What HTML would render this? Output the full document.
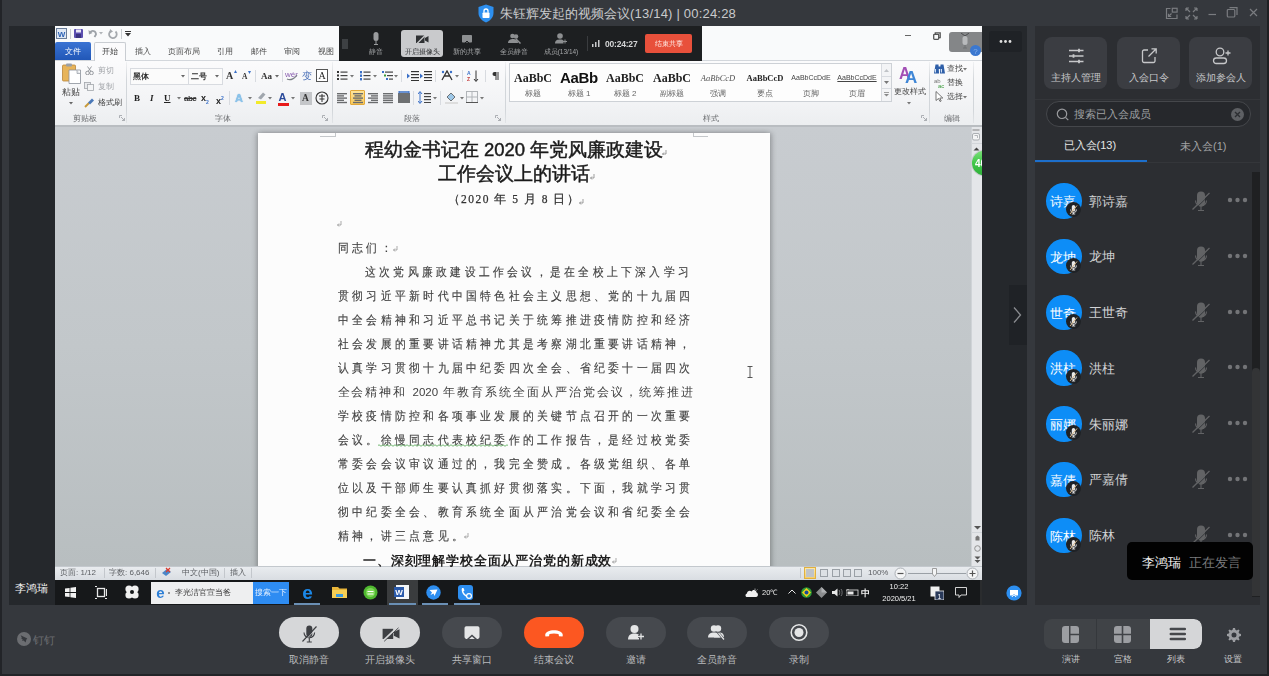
<!DOCTYPE html>
<html><head><meta charset="utf-8">
<style>
*{margin:0;padding:0;box-sizing:border-box}
html,body{width:1269px;height:676px;overflow:hidden;background:#35383d;font-family:"Liberation Sans",sans-serif}
.a{position:absolute}
svg{display:block}
#edgeL{left:0;top:0;width:2px;height:676px;background:#222428}
#edgeR{left:1267px;top:0;width:2px;height:676px;background:#1f2023}
#edgeB{left:0;top:674px;width:1269px;height:2px;background:#222428}
#main{left:9px;top:26px;width:1018px;height:579px;background:#25282c}
#panel{left:1035px;top:26px;width:225px;height:579px;background:#2c2e32}
#word{left:55px;top:26px;width:927px;height:579px;background:#c6cacd;overflow:hidden;filter:blur(0.3px)}
.title{left:500px;top:5px;height:18px;line-height:18px;font-size:13px;color:#c9cacc;white-space:nowrap}
/* panel */
.pbtn{top:11px;width:63px;height:52px;border-radius:8px;background:#3b3d42}
.pbtn .lb{position:absolute;left:0;width:63px;top:35.3px;text-align:center;font-size:9.5px;line-height:12px;color:#c6c7c9;white-space:nowrap}
.pbtn svg{position:absolute;left:23px;top:10px}
.sep{left:0;top:73px;width:225px;height:1px;background:#34363a}
.search{left:11px;top:75px;width:205px;height:26px;border-radius:13px;border:1px solid #45474b;background:#26282c}
.tab1{left:28.5px;top:112px;font-size:11px;color:#e6e6e6;line-height:14px;white-space:nowrap}
.tab2{left:145px;top:112.5px;font-size:11px;color:#a3a4a6;line-height:14px;white-space:nowrap}
.tabline{left:0;top:134px;width:112px;height:2px;background:#1d6fcc}
.tabsep{left:0;top:136px;width:225px;height:1px;background:#34363a}
.item{left:0;width:217px;height:56px}
.av{position:absolute;left:11px;top:0.5px;width:35.5px;height:35.5px;border-radius:50%;background:#0d8df7;color:#fff;font-size:13px;line-height:37.5px;text-align:center;overflow:hidden;letter-spacing:0;text-indent:-1px}
.badge{position:absolute;left:31px;top:19.5px;width:15px;height:15px;border-radius:50%;background:#1f2226}
.nm{position:absolute;left:54px;top:11px;font-size:13px;line-height:16px;color:#d2d3d5;white-space:nowrap}
.mic{position:absolute;left:156px;top:7px}
.dots{position:absolute;left:192px;top:14.7px}
.scrolltrack{left:217px;top:146px;width:8px;height:425px;background:#1f2022}
.thumb{left:217px;top:342px;width:8px;height:228px;background:#333436;border-radius:4px 4px 0 0}
.tbtn{top:616.5px;width:59.5px;height:31.5px;border-radius:16px}
.tbtn svg{position:absolute;left:50%;top:50%;transform:translate(-50%,-50%) translateY(0.5px)}
.tlb{top:652.5px;width:100px;text-align:center;font-size:10px;line-height:14px;color:#b9babc;white-space:nowrap}
.slb{top:652.5px;width:52px;text-align:center;font-size:8.5px;line-height:12px;color:#c5c6c8;white-space:nowrap}
</style></head><body>
<div class="a" id="edgeL"></div>
<div class="a" id="edgeR"></div>
<div class="a" id="edgeB"></div>
<div class="a" id="main"></div>

<!-- title bar -->
<svg class="a" style="left:478px;top:4px" width="16" height="19" viewBox="0 0 16 19"><path d="M8 0.5 L15.5 3 V9 C15.5 13.5 12 16.8 8 18.5 C4 16.8 0.5 13.5 0.5 9 V3 Z" fill="#2d8ff0"/><rect x="4.5" y="8.5" width="7" height="5.5" rx="0.8" fill="#fff"/><path d="M6 8.7 V7 a2 2 0 0 1 4 0 V8.7" stroke="#fff" stroke-width="1.3" fill="none"/></svg>
<div class="a title">朱钰辉发起的视频会议<span style="letter-spacing:0.2px">(13/14) | 00:24:28</span></div>
<svg class="a" style="left:1165px;top:7px" width="100" height="14" viewBox="0 0 100 14" fill="none" stroke="#7a7c80" stroke-width="1.2">
 <path d="M5.5 1.5H1.5V11.5H12V7.5"/><rect x="7.3" y="1.3" width="4.8" height="3.8"/><path d="M3.5 9.5L6.5 6.5M3.5 6.8V9.5H6.2"/>
 <path d="M21 1 L25 5 M21 1 V4 M21 1 H24  M32 1 L28 5 M32 1 V4 M32 1 H29  M21 12 L25 8 M21 12 V9 M21 12 H24  M32 12 L28 8 M32 12 V9 M32 12 H29"/>
 <path d="M43.5 7.5 H51"/>
 <rect x="62.3" y="2.5" width="7.5" height="7.5" rx="1"/><path d="M64.5 0.6 H72 V8"/>
 <path d="M85 2 L92 9 M92 2 L85 9"/>
</svg>

<!-- right panel -->
<div class="a" id="panel">
 <div class="a pbtn" style="left:9px"><svg width="18" height="18" viewBox="0 0 18 18" stroke="#c6c7c9" stroke-width="1.3" fill="none"><path d="M2 3.5H16.5M2 9H16.5M2 14.5H16.5"/><path d="M12 1.8V5.2M6.5 7.3V10.7M12 12.8V16.2" stroke-width="1.8"/></svg><div class="lb">主持人管理</div></div>
 <div class="a pbtn" style="left:82px"><svg width="18" height="18" viewBox="0 0 18 18" stroke="#c6c7c9" stroke-width="1.3" fill="none"><path d="M8 3H4A1.5 1.5 0 0 0 2.5 4.5V14A1.5 1.5 0 0 0 4 15.5H13.5A1.5 1.5 0 0 0 15 14V10"/><path d="M8.5 9.5L16 2M11.5 1.8H16.2V6.5"/></svg><div class="lb">入会口令</div></div>
 <div class="a pbtn" style="left:154px"><svg width="20" height="18" viewBox="0 0 20 18" stroke="#c6c7c9" stroke-width="1.3" fill="none"><circle cx="8" cy="5" r="3.8"/><rect x="1.5" y="11" width="13" height="5.5" rx="2.75"/><path d="M13.5 6H18.5M16 3.5V8.5"/></svg><div class="lb">添加参会人</div></div>
 <div class="a sep"></div>
 <div class="a search"></div>
 <svg class="a" style="left:21px;top:82px" width="14" height="14" viewBox="0 0 14 14" fill="none" stroke="#9a9b9e" stroke-width="1.2"><circle cx="6" cy="5.8" r="4.7"/><path d="M9.5 9.3L12.3 12.1"/></svg>
 <div class="a" style="left:39px;top:81px;font-size:11px;line-height:14px;color:#9fa0a3;white-space:nowrap">搜索已入会成员</div>
 <svg class="a" style="left:196px;top:82px" width="13" height="13" viewBox="0 0 13 13"><circle cx="6.5" cy="6.5" r="6.5" fill="#5e6064"/><path d="M4 4L9 9M9 4L4 9" stroke="#2c2e32" stroke-width="1.4"/></svg>
 <div class="a tab1">已入会(13)</div>
 <div class="a tab2">未入会(1)</div>
 <div class="a tabline"></div>
 <div class="a tabsep"></div>
<div class="a item" style="top:156.5px"><div class="av">诗嘉</div><div class="badge"><svg width="15" height="15" viewBox="0 0 15 15"><rect x="5.8" y="3" width="3.4" height="6.5" rx="1.7" fill="#e8e8e8"/><path d="M4.5 7.5a3 3 0 0 0 6 0M7.5 10.5V12M5.8 12H9.2" stroke="#e8e8e8" stroke-width="0.9" fill="none"/><path d="M4 12L11 3.5" stroke="#d9b98a" stroke-width="1"/></svg></div><div class="nm">郭诗嘉</div><svg class="mic" width="20" height="22" viewBox="0 0 20 22"><rect x="6" y="1.5" width="8" height="15" rx="4" fill="#626365"/><path d="M4.5 10.5a5.5 5.5 0 0 0 11 0M10 16V20.5M7 20.5H13" stroke="#626365" stroke-width="1.1" fill="none"/><path d="M1.5 19.5L18.5 3" stroke="#626365" stroke-width="1.3"/><path d="M2.5 20.5L19.5 4" stroke="#2c2e32" stroke-width="0.8"/></svg><svg class="dots" width="24" height="6" viewBox="0 0 24 6" fill="#737477"><circle cx="3" cy="3" r="2.2"/><circle cx="10.5" cy="3" r="2.2"/><circle cx="18" cy="3" r="2.2"/></svg></div>
<div class="a item" style="top:212.2px"><div class="av">龙坤</div><div class="badge"><svg width="15" height="15" viewBox="0 0 15 15"><rect x="5.8" y="3" width="3.4" height="6.5" rx="1.7" fill="#e8e8e8"/><path d="M4.5 7.5a3 3 0 0 0 6 0M7.5 10.5V12M5.8 12H9.2" stroke="#e8e8e8" stroke-width="0.9" fill="none"/><path d="M4 12L11 3.5" stroke="#d9b98a" stroke-width="1"/></svg></div><div class="nm">龙坤</div><svg class="mic" width="20" height="22" viewBox="0 0 20 22"><rect x="6" y="1.5" width="8" height="15" rx="4" fill="#626365"/><path d="M4.5 10.5a5.5 5.5 0 0 0 11 0M10 16V20.5M7 20.5H13" stroke="#626365" stroke-width="1.1" fill="none"/><path d="M1.5 19.5L18.5 3" stroke="#626365" stroke-width="1.3"/><path d="M2.5 20.5L19.5 4" stroke="#2c2e32" stroke-width="0.8"/></svg><svg class="dots" width="24" height="6" viewBox="0 0 24 6" fill="#737477"><circle cx="3" cy="3" r="2.2"/><circle cx="10.5" cy="3" r="2.2"/><circle cx="18" cy="3" r="2.2"/></svg></div>
<div class="a item" style="top:268.0px"><div class="av">世奇</div><div class="badge"><svg width="15" height="15" viewBox="0 0 15 15"><rect x="5.8" y="3" width="3.4" height="6.5" rx="1.7" fill="#e8e8e8"/><path d="M4.5 7.5a3 3 0 0 0 6 0M7.5 10.5V12M5.8 12H9.2" stroke="#e8e8e8" stroke-width="0.9" fill="none"/><path d="M4 12L11 3.5" stroke="#d9b98a" stroke-width="1"/></svg></div><div class="nm">王世奇</div><svg class="mic" width="20" height="22" viewBox="0 0 20 22"><rect x="6" y="1.5" width="8" height="15" rx="4" fill="#626365"/><path d="M4.5 10.5a5.5 5.5 0 0 0 11 0M10 16V20.5M7 20.5H13" stroke="#626365" stroke-width="1.1" fill="none"/><path d="M1.5 19.5L18.5 3" stroke="#626365" stroke-width="1.3"/><path d="M2.5 20.5L19.5 4" stroke="#2c2e32" stroke-width="0.8"/></svg><svg class="dots" width="24" height="6" viewBox="0 0 24 6" fill="#737477"><circle cx="3" cy="3" r="2.2"/><circle cx="10.5" cy="3" r="2.2"/><circle cx="18" cy="3" r="2.2"/></svg></div>
<div class="a item" style="top:323.8px"><div class="av">洪柱</div><div class="badge"><svg width="15" height="15" viewBox="0 0 15 15"><rect x="5.8" y="3" width="3.4" height="6.5" rx="1.7" fill="#e8e8e8"/><path d="M4.5 7.5a3 3 0 0 0 6 0M7.5 10.5V12M5.8 12H9.2" stroke="#e8e8e8" stroke-width="0.9" fill="none"/><path d="M4 12L11 3.5" stroke="#d9b98a" stroke-width="1"/></svg></div><div class="nm">洪柱</div><svg class="mic" width="20" height="22" viewBox="0 0 20 22"><rect x="6" y="1.5" width="8" height="15" rx="4" fill="#626365"/><path d="M4.5 10.5a5.5 5.5 0 0 0 11 0M10 16V20.5M7 20.5H13" stroke="#626365" stroke-width="1.1" fill="none"/><path d="M1.5 19.5L18.5 3" stroke="#626365" stroke-width="1.3"/><path d="M2.5 20.5L19.5 4" stroke="#2c2e32" stroke-width="0.8"/></svg><svg class="dots" width="24" height="6" viewBox="0 0 24 6" fill="#737477"><circle cx="3" cy="3" r="2.2"/><circle cx="10.5" cy="3" r="2.2"/><circle cx="18" cy="3" r="2.2"/></svg></div>
<div class="a item" style="top:379.5px"><div class="av">丽娜</div><div class="badge"><svg width="15" height="15" viewBox="0 0 15 15"><rect x="5.8" y="3" width="3.4" height="6.5" rx="1.7" fill="#e8e8e8"/><path d="M4.5 7.5a3 3 0 0 0 6 0M7.5 10.5V12M5.8 12H9.2" stroke="#e8e8e8" stroke-width="0.9" fill="none"/><path d="M4 12L11 3.5" stroke="#d9b98a" stroke-width="1"/></svg></div><div class="nm">朱丽娜</div><svg class="mic" width="20" height="22" viewBox="0 0 20 22"><rect x="6" y="1.5" width="8" height="15" rx="4" fill="#626365"/><path d="M4.5 10.5a5.5 5.5 0 0 0 11 0M10 16V20.5M7 20.5H13" stroke="#626365" stroke-width="1.1" fill="none"/><path d="M1.5 19.5L18.5 3" stroke="#626365" stroke-width="1.3"/><path d="M2.5 20.5L19.5 4" stroke="#2c2e32" stroke-width="0.8"/></svg><svg class="dots" width="24" height="6" viewBox="0 0 24 6" fill="#737477"><circle cx="3" cy="3" r="2.2"/><circle cx="10.5" cy="3" r="2.2"/><circle cx="18" cy="3" r="2.2"/></svg></div>
<div class="a item" style="top:435.2px"><div class="av">嘉倩</div><div class="badge"><svg width="15" height="15" viewBox="0 0 15 15"><rect x="5.8" y="3" width="3.4" height="6.5" rx="1.7" fill="#e8e8e8"/><path d="M4.5 7.5a3 3 0 0 0 6 0M7.5 10.5V12M5.8 12H9.2" stroke="#e8e8e8" stroke-width="0.9" fill="none"/><path d="M4 12L11 3.5" stroke="#d9b98a" stroke-width="1"/></svg></div><div class="nm">严嘉倩</div><svg class="mic" width="20" height="22" viewBox="0 0 20 22"><rect x="6" y="1.5" width="8" height="15" rx="4" fill="#626365"/><path d="M4.5 10.5a5.5 5.5 0 0 0 11 0M10 16V20.5M7 20.5H13" stroke="#626365" stroke-width="1.1" fill="none"/><path d="M1.5 19.5L18.5 3" stroke="#626365" stroke-width="1.3"/><path d="M2.5 20.5L19.5 4" stroke="#2c2e32" stroke-width="0.8"/></svg><svg class="dots" width="24" height="6" viewBox="0 0 24 6" fill="#737477"><circle cx="3" cy="3" r="2.2"/><circle cx="10.5" cy="3" r="2.2"/><circle cx="18" cy="3" r="2.2"/></svg></div>
<div class="a item" style="top:491.0px"><div class="av">陈林</div><div class="badge"><svg width="15" height="15" viewBox="0 0 15 15"><rect x="5.8" y="3" width="3.4" height="6.5" rx="1.7" fill="#e8e8e8"/><path d="M4.5 7.5a3 3 0 0 0 6 0M7.5 10.5V12M5.8 12H9.2" stroke="#e8e8e8" stroke-width="0.9" fill="none"/><path d="M4 12L11 3.5" stroke="#d9b98a" stroke-width="1"/></svg></div><div class="nm">陈林</div><svg class="mic" width="20" height="22" viewBox="0 0 20 22"><rect x="6" y="1.5" width="8" height="15" rx="4" fill="#626365"/><path d="M4.5 10.5a5.5 5.5 0 0 0 11 0M10 16V20.5M7 20.5H13" stroke="#626365" stroke-width="1.1" fill="none"/><path d="M1.5 19.5L18.5 3" stroke="#626365" stroke-width="1.3"/><path d="M2.5 20.5L19.5 4" stroke="#2c2e32" stroke-width="0.8"/></svg><svg class="dots" width="24" height="6" viewBox="0 0 24 6" fill="#737477"><circle cx="3" cy="3" r="2.2"/><circle cx="10.5" cy="3" r="2.2"/><circle cx="18" cy="3" r="2.2"/></svg></div>
 <div class="a scrolltrack"></div>
 <div class="a thumb"></div>
</div>

<!-- bottom toolbar -->
<div class="a tbtn" style="left:279px;background:#d6d7d9"><svg width="20" height="22" viewBox="0 0 20 22"><rect x="7.3" y="4" width="6" height="11.5" rx="3" fill="#3d3f43"/><path d="M5 11a5.3 5.3 0 0 0 10.6 0" stroke="#3d3f43" stroke-width="1.1" fill="none"/><path d="M10.3 16.5V20M7.8 20.5H12.8" stroke="#3d3f43" stroke-width="1.1"/><path d="M3.5 20L17.5 5" stroke="#3d3f43" stroke-width="1.2"/><path d="M4.5 20.8L18.5 5.8" stroke="#d6d7d9" stroke-width="0.8"/></svg></div><div class="a tlb" style="left:259px">取消静音</div>
<div class="a tbtn" style="left:360px;background:#d6d7d9"><svg width="22" height="22" viewBox="0 0 22 22"><rect x="3.6" y="7.3" width="10.6" height="10.2" fill="#3d3f43"/><path d="M14.8 10.5L20.5 7.8V17L14.8 14.3Z" fill="#3d3f43"/><path d="M4.5 19L18.8 5.5" stroke="#d6d7d9" stroke-width="1.8"/><path d="M5.2 19.8L19.5 6.3" stroke="#3d3f43" stroke-width="0.9"/></svg></div><div class="a tlb" style="left:340px">开启摄像头</div>
<div class="a tbtn" style="left:442px;background:#46494e"><svg width="20" height="20" viewBox="0 0 20 20"><rect x="2.5" y="3.8" width="15" height="12.6" rx="1.8" fill="#e4e5e6"/><path d="M5.5 17L10 13L14.5 17" stroke="#46494e" stroke-width="1.6" fill="none"/></svg></div><div class="a tlb" style="left:422px">共享窗口</div>
<div class="a tbtn" style="left:524px;background:#fc5721"><svg width="22" height="22" viewBox="0 0 22 22"><path d="M2.2 13.8C2.2 10.5 6.5 8.8 11 8.8C15.5 8.8 19.8 10.5 19.8 13.8L19.5 15L16 14.8L15.5 12.5C13 11.8 9 11.8 6.5 12.5L6 14.8L2.5 15Z" fill="#fff"/></svg></div><div class="a tlb" style="left:504px">结束会议</div>
<div class="a tbtn" style="left:606px;background:#46494e"><svg width="20" height="20" viewBox="0 0 20 20"><circle cx="8.5" cy="6.5" r="4" fill="#e4e5e6"/><path d="M2 17C2 12.5 5 11 8.5 11C10.5 11 12 11.5 13 12.5V17Z" fill="#e4e5e6"/><path d="M12 14H18M15 11V17" stroke="#46494e" stroke-width="3"/><path d="M12 14H18M15 11V17" stroke="#e4e5e6" stroke-width="1.3"/></svg></div><div class="a tlb" style="left:586px">邀请</div>
<div class="a tbtn" style="left:687px;background:#46494e"><svg width="22" height="20" viewBox="0 0 22 20"><circle cx="8" cy="6" r="3.2" fill="#e4e5e6"/><circle cx="12" cy="6" r="3.2" fill="#e4e5e6"/><path d="M2 15C2 11 5 10 8 10C11 10 14 11 14 15Z" fill="#e4e5e6"/><path d="M8 15C8 11 11 10 13 10C16 10 18 11 18 15Z" fill="#e4e5e6"/><path d="M12 10L18 17" stroke="#46494e" stroke-width="2.5"/><path d="M12.5 10.5L18 17" stroke="#e4e5e6" stroke-width="1.2"/></svg></div><div class="a tlb" style="left:667px">全员静音</div>
<div class="a tbtn" style="left:769px;background:#46494e"><svg width="20" height="20" viewBox="0 0 20 20"><circle cx="10" cy="10" r="7.8" stroke="#e4e5e6" stroke-width="1.6" fill="none"/><circle cx="10" cy="10" r="4.5" fill="#e4e5e6"/></svg></div><div class="a tlb" style="left:749px">录制</div>

<div class="a" id="word"><div class="a" style="left:0.0px;top:0.0px;width:927px;height:34px;background:#f9fafb"></div>
<div class="a" style="left:0.0px;top:34.0px;width:927px;height:65px;background:linear-gradient(#fbfbfc,#f3f4f6 60%,#eceef0);border-top:1px solid #d3d7dc"></div>
<div class="a" style="left:0.0px;top:99.0px;width:927px;height:2px;background:#b9bdc1"></div>
<div class="a" style="left:0.0px;top:101.0px;width:927px;height:439px;background:linear-gradient(#c8ccd0,#c2c7ca 50%,#b8bec0)"></div>
<div class="a" style="left:203.0px;top:107.0px;width:512px;height:439px;background:#fcfcfc;box-shadow:-2px 0 5px rgba(0,0,0,.2),2px 0 5px rgba(0,0,0,.22)"></div>
<div class="a" style="left:916.0px;top:101.0px;width:11px;height:439px;background:#e4e6e9;border-left:1px solid #cfd3d7"></div>
<div class="a" style="left:0.0px;top:540.0px;width:927px;height:14px;background:linear-gradient(#e9ecef,#d9dde2);border-top:1px solid #c3c8cd"></div>
<div class="a" style="left:0.0px;top:554.0px;width:927px;height:25px;background:#16181a"></div>
<svg class="a" style="left:1.0px;top:2.0px;" width="11" height="11" viewBox="0 0 11 11"><rect x="0.5" y="0.5" width="10" height="10" fill="#dfe8f5" stroke="#6a7d99"/><text x="5.5" y="8.6" font-size="8" font-weight="bold" text-anchor="middle" fill="#2b61b5" font-family="Liberation Sans">W</text></svg>
<div class="a" style="left:15.0px;top:3.0px;width:1px;height:10px;background:#c8ccd0"></div>
<svg class="a" style="left:19.0px;top:3.0px;" width="9" height="9" viewBox="0 0 9 9"><rect x="0" y="0" width="9" height="9" rx="1" fill="#5b4fb0"/><rect x="2" y="0.5" width="5" height="3" fill="#e8e6f5"/><rect x="2" y="5" width="5" height="4" fill="#3a3380"/></svg>
<svg class="a" style="left:33.0px;top:3.0px;" width="9" height="9" viewBox="0 0 9 9"><path d="M2 3.5 C4 1 8 1.5 8 5.5 L6.5 8" stroke="#9da2a8" stroke-width="1.8" fill="none"/><path d="M0.5 1 L1 5.5 L4.5 4" fill="#9da2a8"/></svg>
<svg class="a" style="left:44.0px;top:6.0px;" width="4" height="3" viewBox="0 0 4 3"><path d="M0 0H4L2 2.5Z" fill="#b0b4b8"/></svg>
<svg class="a" style="left:53.0px;top:3.0px;" width="10" height="10" viewBox="0 0 10 10"><path d="M7.5 2.5 A3.8 3.8 0 1 1 3 2" stroke="#a5a9ae" stroke-width="1.8" fill="none"/><path d="M2 0L5 2.5L1.5 4.5Z" fill="#a5a9ae"/></svg>
<div class="a" style="left:66.0px;top:3.0px;width:1px;height:10px;background:#c8ccd0"></div>
<svg class="a" style="left:70.0px;top:5.0px;" width="6" height="6" viewBox="0 0 6 6"><path d="M0 0H6V1H0Z M0 2H6L3 5.5Z" fill="#333"/></svg>
<div class="a" style="left:849.5px;top:9.0px;width:6px;height:1.2px;background:#666"></div>
<svg class="a" style="left:877.5px;top:5.5px;" width="8" height="8" viewBox="0 0 8 8"><rect x="0.7" y="2.3" width="5" height="5" rx="0.8" fill="none" stroke="#555" stroke-width="1.3"/><path d="M2.3 2.3V0.8H7.2V5.7H5.7" fill="none" stroke="#555" stroke-width="1.3"/></svg>
<div class="a" style="left:0.0px;top:16.0px;width:36px;height:18px;background:linear-gradient(#3a73d3,#2157b7);border-radius:2px 2px 0 0"></div>
<div class="a" style="left:0.0px;top:19.5px;width:36px;font-size:8px;line-height:12px;color:#ffffff;white-space:nowrap;text-align:center;">文件</div>
<div class="a" style="left:39.0px;top:16.0px;width:32px;height:19px;background:#fbfbfc;border:1px solid #c9cdd2;border-bottom:none;border-radius:2px 2px 0 0"></div>
<div class="a" style="left:39.0px;top:20.0px;width:32px;font-size:8px;line-height:12px;color:#3a3a3a;white-space:nowrap;text-align:center;">开始</div>
<div class="a" style="left:68.0px;top:19.5px;width:40px;font-size:8px;line-height:12px;color:#4a4a4a;white-space:nowrap;text-align:center;">插入</div>
<div class="a" style="left:109.0px;top:19.5px;width:40px;font-size:8px;line-height:12px;color:#4a4a4a;white-space:nowrap;text-align:center;">页面布局</div>
<div class="a" style="left:150.0px;top:19.5px;width:40px;font-size:8px;line-height:12px;color:#4a4a4a;white-space:nowrap;text-align:center;">引用</div>
<div class="a" style="left:184.0px;top:19.5px;width:40px;font-size:8px;line-height:12px;color:#4a4a4a;white-space:nowrap;text-align:center;">邮件</div>
<div class="a" style="left:217.0px;top:19.5px;width:40px;font-size:8px;line-height:12px;color:#4a4a4a;white-space:nowrap;text-align:center;">审阅</div>
<div class="a" style="left:251.0px;top:19.5px;width:40px;font-size:8px;line-height:12px;color:#4a4a4a;white-space:nowrap;text-align:center;">视图</div>
<div class="a" style="left:71.0px;top:36.0px;width:1px;height:61px;background:linear-gradient(rgba(200,204,208,0.2),#d2d6da 30%,#d2d6da 80%,rgba(200,204,208,0.3))"></div>
<div class="a" style="left:277.0px;top:36.0px;width:1px;height:61px;background:linear-gradient(rgba(200,204,208,0.2),#d2d6da 30%,#d2d6da 80%,rgba(200,204,208,0.3))"></div>
<div class="a" style="left:450.0px;top:36.0px;width:1px;height:61px;background:linear-gradient(rgba(200,204,208,0.2),#d2d6da 30%,#d2d6da 80%,rgba(200,204,208,0.3))"></div>
<div class="a" style="left:874.0px;top:36.0px;width:1px;height:61px;background:linear-gradient(rgba(200,204,208,0.2),#d2d6da 30%,#d2d6da 80%,rgba(200,204,208,0.3))"></div>
<div class="a" style="left:918.0px;top:36.0px;width:1px;height:61px;background:linear-gradient(rgba(200,204,208,0.2),#d2d6da 30%,#d2d6da 80%,rgba(200,204,208,0.3))"></div>
<svg class="a" style="left:7.0px;top:37.0px;" width="19" height="21" viewBox="0 0 19 21"><rect x="0.5" y="2" width="13" height="16" rx="1" fill="#e7b45a" stroke="#b9853a" stroke-width="0.8"/><rect x="4" y="0.5" width="6" height="3" rx="1" fill="#9aa0a8"/><path d="M7 7H18.5V20.5H7Z" fill="#fff" stroke="#8a9099" stroke-width="0.8"/><path d="M15 7V10.5H18.5" fill="#e0e3e7" stroke="#8a9099" stroke-width="0.6"/></svg>
<div class="a" style="left:1.0px;top:60.2px;width:30px;font-size:8.5px;line-height:12.5px;color:#444;white-space:nowrap;text-align:center;">粘贴</div>
<svg class="a" style="left:14.0px;top:76.0px;" width="4" height="3" viewBox="0 0 4 3"><path d="M0 0H4L2 2.5Z" fill="#666"/></svg>
<svg class="a" style="left:30.0px;top:40.0px;" width="9" height="9" viewBox="0 0 9 9"><circle cx="2.5" cy="7" r="1.8" fill="none" stroke="#8d9196" stroke-width="0.9"/><circle cx="6.5" cy="7" r="1.8" fill="none" stroke="#8d9196" stroke-width="0.9"/><path d="M3 5.5L6.5 0.5M6 5.5L2.5 0.5" stroke="#8d9196" stroke-width="0.9"/></svg>
<div class="a" style="left:43.0px;top:38.8px;font-size:7.5px;line-height:11.5px;color:#a4a7ab;white-space:nowrap;">剪切</div>
<svg class="a" style="left:29.0px;top:56.0px;" width="10" height="9" viewBox="0 0 10 9"><rect x="0.5" y="0.5" width="6" height="6" fill="#e8eaed" stroke="#a2a6ab" stroke-width="0.8"/><rect x="3.5" y="2.5" width="6" height="6" fill="#f4f5f6" stroke="#a2a6ab" stroke-width="0.8"/></svg>
<div class="a" style="left:43.0px;top:54.8px;font-size:7.5px;line-height:11.5px;color:#a4a7ab;white-space:nowrap;">复制</div>
<svg class="a" style="left:29.0px;top:71.0px;" width="11" height="11" viewBox="0 0 11 11"><path d="M1 10L5 6" stroke="#c89a3a" stroke-width="2"/><path d="M4 5.5L8 1.5L10 3.5L6 7.5Z" fill="#4a78b8"/></svg>
<div class="a" style="left:43.0px;top:70.5px;font-size:8px;line-height:12px;color:#3e3e3e;white-space:nowrap;">格式刷</div>
<div class="a" style="left:9.5px;top:86.5px;width:40px;font-size:8px;line-height:12px;color:#6d6f72;white-space:nowrap;text-align:center;">剪贴板</div>
<svg class="a" style="left:64.0px;top:89.0px;" width="6" height="6" viewBox="0 0 6 6"><path d="M0.5 0.5H3M0.5 0.5V3M2 2L5.5 5.5M5.5 3V5.5H3" stroke="#9a9ea3" stroke-width="0.8" fill="none"/></svg>
<div class="a" style="left:75.0px;top:42.0px;width:59px;height:17px;background:#fbfbfb;border:1px solid #d8dbe0"></div>
<div class="a" style="left:77.5px;top:44.8px;font-size:7.5px;line-height:11.5px;color:#2e2e2e;white-space:nowrap;font-weight:bold">黑体</div>
<svg class="a" style="left:126.0px;top:49.0px;" width="4" height="3" viewBox="0 0 4 3"><path d="M0 0H4L2 2.5Z" fill="#666"/></svg>
<div class="a" style="left:133.0px;top:42.0px;width:35px;height:17px;background:#fbfbfb;border:1px solid #d8dbe0"></div>
<div class="a" style="left:135.5px;top:44.5px;font-size:8px;line-height:12px;color:#2e2e2e;white-space:nowrap;font-weight:bold">二号</div>
<svg class="a" style="left:160.0px;top:49.0px;" width="4" height="3" viewBox="0 0 4 3"><path d="M0 0H4L2 2.5Z" fill="#666"/></svg>
<div class="a" style="left:171.0px;top:43.0px;font-size:10px;line-height:14px;color:#333;white-space:nowrap;font-family:'Liberation Serif';font-weight:bold">A</div>
<svg class="a" style="left:179.0px;top:44.0px;" width="3" height="3" viewBox="0 0 3 3"><path d="M0 3L1.5 0L3 3Z" fill="#3a70c8"/></svg>
<div class="a" style="left:187.0px;top:45.2px;font-size:7.5px;line-height:11.5px;color:#333;white-space:nowrap;font-family:'Liberation Serif';font-weight:bold">A</div>
<svg class="a" style="left:193.0px;top:45.0px;" width="3" height="3" viewBox="0 0 3 3"><path d="M0 0L1.5 3L3 0Z" fill="#3a70c8"/></svg>
<div class="a" style="left:200.0px;top:44.0px;width:1px;height:12px;background:#d8dbe0"></div>
<div class="a" style="left:206.0px;top:43.5px;font-size:9px;line-height:13px;color:#333;white-space:nowrap;font-family:'Liberation Serif';font-weight:bold">Aa</div>
<svg class="a" style="left:220.0px;top:49.0px;" width="4" height="3" viewBox="0 0 4 3"><path d="M0 0H4L2 2.5Z" fill="#666"/></svg>
<div class="a" style="left:227.0px;top:44.0px;width:1px;height:12px;background:#d8dbe0"></div>
<svg class="a" style="left:230.0px;top:43.0px;" width="13" height="12" viewBox="0 0 13 12"><text x="0" y="8" font-size="8" fill="#8a5fb0" font-family="Liberation Sans">wén</text><path d="M2 10 C6 12 10 9 12 6" stroke="#7a7f85" stroke-width="1.2" fill="none"/></svg>
<div class="a" style="left:247.0px;top:42.5px;font-size:10px;line-height:14px;color:#4a70b8;white-space:nowrap;">变</div>
<div class="a" style="left:261.0px;top:43.0px;width:12px;height:13px;border:1px solid #555;background:#fff"></div>
<div class="a" style="left:263.5px;top:42.5px;font-size:10px;line-height:14px;color:#222;white-space:nowrap;font-family:'Liberation Serif'">A</div>
<div class="a" style="left:79.0px;top:66.0px;font-size:9px;line-height:13px;color:#222;white-space:nowrap;font-family:'Liberation Serif';font-weight:bold">B</div>
<div class="a" style="left:95.0px;top:66.0px;font-size:9px;line-height:13px;color:#222;white-space:nowrap;font-family:'Liberation Serif';font-style:italic;font-weight:bold">I</div>
<div class="a" style="left:109.0px;top:66.0px;font-size:9px;line-height:13px;color:#222;white-space:nowrap;font-family:'Liberation Serif';font-weight:bold"><u>U</u></div>
<svg class="a" style="left:122.0px;top:71.0px;" width="4" height="3" viewBox="0 0 4 3"><path d="M0 0H4L2 2.5Z" fill="#777"/></svg>
<div class="a" style="left:129.0px;top:66.5px;font-size:8px;line-height:12px;color:#333;white-space:nowrap;font-weight:bold;letter-spacing:-0.5px"><s>abc</s></div>
<div class="a" style="left:146.0px;top:66.0px;font-size:9px;line-height:13px;color:#222;white-space:nowrap;font-weight:bold">x<sub style='font-size:5px;color:#3a70c8'>2</sub></div>
<div class="a" style="left:161.0px;top:66.0px;font-size:9px;line-height:13px;color:#222;white-space:nowrap;font-weight:bold">x<sup style='font-size:5px;color:#3a70c8'>2</sup></div>
<div class="a" style="left:174.0px;top:65.0px;width:1px;height:14px;background:#d8dbe0"></div>
<div class="a" style="left:180.0px;top:65.0px;font-size:11px;line-height:15px;color:#8cc4ea;white-space:nowrap;font-weight:bold;text-shadow:0 0 1px #5a9fd8">A</div>
<svg class="a" style="left:193.0px;top:71.0px;" width="4" height="3" viewBox="0 0 4 3"><path d="M0 0H4L2 2.5Z" fill="#777"/></svg>
<svg class="a" style="left:200.0px;top:65.0px;" width="12" height="14" viewBox="0 0 12 14"><path d="M3 7L8 1.5L10.5 3.5L6 8.5Z" fill="#a0a6ad"/><rect x="1" y="10" width="10" height="3" fill="#f2ea2a"/></svg>
<svg class="a" style="left:213.0px;top:71.0px;" width="4" height="3" viewBox="0 0 4 3"><path d="M0 0H4L2 2.5Z" fill="#777"/></svg>
<div class="a" style="left:223.5px;top:64.0px;font-size:11px;line-height:15px;color:#2a4a9a;white-space:nowrap;font-weight:bold">A</div>
<div class="a" style="left:223.0px;top:77.0px;width:11px;height:3px;background:#e81a1a"></div>
<svg class="a" style="left:236.0px;top:71.0px;" width="4" height="3" viewBox="0 0 4 3"><path d="M0 0H4L2 2.5Z" fill="#777"/></svg>
<div class="a" style="left:245.0px;top:66.0px;width:12px;height:13px;background:#c4c6c9"></div>
<div class="a" style="left:247.0px;top:65.8px;font-size:9.5px;line-height:13.5px;color:#333;white-space:nowrap;font-family:'Liberation Serif';font-weight:bold">A</div>
<svg class="a" style="left:260.0px;top:65.0px;" width="14" height="14" viewBox="0 0 14 14"><circle cx="7" cy="7" r="6" fill="none" stroke="#333" stroke-width="1.1"/><path d="M4 5H10M7 3V11M4.5 8H9.5" stroke="#333" stroke-width="1"/></svg>
<div class="a" style="left:148.0px;top:86.5px;width:40px;font-size:8px;line-height:12px;color:#6d6f72;white-space:nowrap;text-align:center;">字体</div>
<svg class="a" style="left:267.0px;top:89.0px;" width="6" height="6" viewBox="0 0 6 6"><path d="M0.5 0.5H3M0.5 0.5V3M2 2L5.5 5.5M5.5 3V5.5H3" stroke="#9a9ea3" stroke-width="0.8" fill="none"/></svg>
<svg class="a" style="left:282.0px;top:45.0px;" width="11" height="10" viewBox="0 0 11 10"><rect x="0" y="0.0" width="2" height="2" fill="#333"/><rect x="3.5" y="0.5" width="7" height="1.2" fill="#444"/><rect x="0" y="3.5" width="2" height="2" fill="#333"/><rect x="3.5" y="4.0" width="7" height="1.2" fill="#444"/><rect x="0" y="7.0" width="2" height="2" fill="#333"/><rect x="3.5" y="7.5" width="7" height="1.2" fill="#444"/></svg>
<svg class="a" style="left:295.0px;top:49.0px;" width="4" height="3" viewBox="0 0 4 3"><path d="M0 0H4L2 2.5Z" fill="#777"/></svg>
<svg class="a" style="left:305.0px;top:45.0px;" width="11" height="10" viewBox="0 0 11 10"><rect x="0" y="0.0" width="2" height="2.4" fill="#3a70c8"/><rect x="3.5" y="0.5" width="7" height="1.2" fill="#444"/><rect x="0" y="3.5" width="2" height="2.4" fill="#3a70c8"/><rect x="3.5" y="4.0" width="7" height="1.2" fill="#444"/><rect x="0" y="7.0" width="2" height="2.4" fill="#3a70c8"/><rect x="3.5" y="7.5" width="7" height="1.2" fill="#444"/></svg>
<svg class="a" style="left:318.0px;top:49.0px;" width="4" height="3" viewBox="0 0 4 3"><path d="M0 0H4L2 2.5Z" fill="#777"/></svg>
<svg class="a" style="left:327.0px;top:45.0px;" width="12" height="11" viewBox="0 0 12 11"><rect x="0" y="0" width="2" height="2" fill="#3a70c8"/><rect x="3" y="0.5" width="8" height="1.2" fill="#444"/><rect x="2" y="3.5" width="2" height="2" fill="#3a9a3a"/><rect x="5" y="4" width="6" height="1.2" fill="#444"/><rect x="4" y="7" width="2" height="2" fill="#3a70c8"/><rect x="7" y="7.5" width="4" height="1.2" fill="#444"/></svg>
<svg class="a" style="left:339.0px;top:49.0px;" width="4" height="3" viewBox="0 0 4 3"><path d="M0 0H4L2 2.5Z" fill="#777"/></svg>
<div class="a" style="left:346.0px;top:44.0px;width:1px;height:12px;background:#d8dbe0"></div>
<svg class="a" style="left:352.0px;top:45.0px;" width="12" height="10" viewBox="0 0 12 10"><rect x="4" y="0" width="8" height="1.2" fill="#333"/><rect x="4" y="3" width="8" height="1.2" fill="#333"/><rect x="4" y="6" width="8" height="1.2" fill="#333"/><rect x="4" y="9" width="8" height="1" fill="#333"/><path d="M0 2.5L3 5L0 7.5Z" fill="#3a70c8"/></svg>
<svg class="a" style="left:365.0px;top:45.0px;" width="12" height="10" viewBox="0 0 12 10"><rect x="4" y="0" width="8" height="1.2" fill="#333"/><rect x="4" y="3" width="8" height="1.2" fill="#333"/><rect x="4" y="6" width="8" height="1.2" fill="#333"/><rect x="4" y="9" width="8" height="1" fill="#333"/><path d="M0 2.5L3 5L0 7.5Z" fill="#3a70c8"/></svg>
<div class="a" style="left:380.0px;top:44.0px;width:1px;height:12px;background:#d8dbe0"></div>
<svg class="a" style="left:386.0px;top:44.0px;" width="13" height="11" viewBox="0 0 13 11"><path d="M1 10L6 1L11 10M3 6H9" stroke="#333" stroke-width="1.3" fill="none"/><circle cx="2" cy="2" r="1.2" fill="#3a70c8"/><circle cx="10" cy="2" r="1.2" fill="#3a70c8"/></svg>
<svg class="a" style="left:400.0px;top:49.0px;" width="4" height="3" viewBox="0 0 4 3"><path d="M0 0H4L2 2.5Z" fill="#777"/></svg>
<div class="a" style="left:407.0px;top:44.0px;width:1px;height:12px;background:#d8dbe0"></div>
<svg class="a" style="left:412.0px;top:44.0px;" width="12" height="12" viewBox="0 0 12 12"><text x="0" y="5" font-size="5" fill="#3a70c8" font-family="Liberation Sans" font-weight="bold">A</text><text x="0" y="11" font-size="5" fill="#c03030" font-family="Liberation Sans" font-weight="bold">Z</text><path d="M9 0.5V11M7 9L9 11.5L11 9" stroke="#333" stroke-width="1" fill="none"/></svg>
<div class="a" style="left:430.0px;top:44.0px;width:1px;height:12px;background:#d8dbe0"></div>
<svg class="a" style="left:436.0px;top:45.0px;" width="8" height="10" viewBox="0 0 8 10"><path d="M5 1V9M7 1V9" stroke="#333" stroke-width="1"/><path d="M5 1H3.5A2 2 0 0 0 3.5 5H5" fill="#333"/></svg>
<svg class="a" style="left:282.0px;top:66.5px;" width="10" height="11" viewBox="0 0 10 11"><rect x="0" y="0.0" width="10" height="1.4" fill="#6a6c6e"/><rect x="0" y="2.2" width="7" height="1.4" fill="#6a6c6e"/><rect x="0" y="4.4" width="10" height="1.4" fill="#6a6c6e"/><rect x="0" y="6.6000000000000005" width="7" height="1.4" fill="#6a6c6e"/><rect x="0" y="8.8" width="10" height="1.4" fill="#6a6c6e"/></svg>
<div class="a" style="left:295.0px;top:64.0px;width:15px;height:15px;background:linear-gradient(#fde49a,#f8c95a);border:1px solid #e3a93a;border-radius:1px"></div>
<svg class="a" style="left:297.5px;top:66.5px;" width="10" height="11" viewBox="0 0 10 11"><rect x="0.0" y="0.0" width="10" height="1.4" fill="#6a6c6e"/><rect x="1.5" y="2.2" width="7" height="1.4" fill="#6a6c6e"/><rect x="0.0" y="4.4" width="10" height="1.4" fill="#6a6c6e"/><rect x="1.5" y="6.6000000000000005" width="7" height="1.4" fill="#6a6c6e"/><rect x="0.0" y="8.8" width="10" height="1.4" fill="#6a6c6e"/></svg>
<svg class="a" style="left:313.0px;top:66.5px;" width="10" height="11" viewBox="0 0 10 11"><rect x="0" y="0.0" width="10" height="1.4" fill="#6a6c6e"/><rect x="3" y="2.2" width="7" height="1.4" fill="#6a6c6e"/><rect x="0" y="4.4" width="10" height="1.4" fill="#6a6c6e"/><rect x="3" y="6.6000000000000005" width="7" height="1.4" fill="#6a6c6e"/><rect x="0" y="8.8" width="10" height="1.4" fill="#6a6c6e"/></svg>
<svg class="a" style="left:328.0px;top:66.5px;" width="10" height="11" viewBox="0 0 10 11"><rect x="0.0" y="0.0" width="10" height="1.4" fill="#6a6c6e"/><rect x="0.0" y="2.2" width="10" height="1.4" fill="#6a6c6e"/><rect x="0.0" y="4.4" width="10" height="1.4" fill="#6a6c6e"/><rect x="0.0" y="6.6000000000000005" width="10" height="1.4" fill="#6a6c6e"/><rect x="0.0" y="8.8" width="10" height="1.4" fill="#6a6c6e"/></svg>
<svg class="a" style="left:343.0px;top:65.0px;" width="12" height="13" viewBox="0 0 12 13"><rect x="0" y="2" width="12" height="10" fill="#6e7072"/><path d="M1 1H11" stroke="#3a70c8" stroke-width="1.5"/><path d="M1 0V2.5M11 0V2.5" stroke="#3a70c8" stroke-width="1"/></svg>
<div class="a" style="left:358.0px;top:65.0px;width:1px;height:14px;background:#d8dbe0"></div>
<svg class="a" style="left:363.0px;top:65.0px;" width="14" height="13" viewBox="0 0 14 13"><path d="M2 1V12M0 3L2 0.5L4 3M0 10L2 12.5L4 10" stroke="#3a70c8" stroke-width="1" fill="none"/><rect x="6" y="2" width="7" height="1.2" fill="#444"/><rect x="6" y="5" width="7" height="1.2" fill="#444"/><rect x="6" y="8" width="7" height="1.2" fill="#444"/><rect x="6" y="11" width="7" height="1" fill="#444"/></svg>
<svg class="a" style="left:378.0px;top:71.0px;" width="4" height="3" viewBox="0 0 4 3"><path d="M0 0H4L2 2.5Z" fill="#777"/></svg>
<div class="a" style="left:385.0px;top:65.0px;width:1px;height:14px;background:#d8dbe0"></div>
<svg class="a" style="left:390.0px;top:65.0px;" width="13" height="13" viewBox="0 0 13 13"><path d="M2 6L6 2L10 6L6 10Z" fill="#9ec8e8" stroke="#555" stroke-width="0.8"/><rect x="0" y="11" width="13" height="2" fill="#ddd"/></svg>
<svg class="a" style="left:405.0px;top:71.0px;" width="4" height="3" viewBox="0 0 4 3"><path d="M0 0H4L2 2.5Z" fill="#777"/></svg>
<svg class="a" style="left:411.0px;top:65.0px;" width="12" height="12" viewBox="0 0 12 12"><rect x="0.5" y="0.5" width="11" height="11" fill="none" stroke="#b0b4b8"/><path d="M6 0.5V11.5M0.5 6H11.5" stroke="#b0b4b8"/><path d="M0 11.5H12" stroke="#555"/></svg>
<svg class="a" style="left:425.0px;top:71.0px;" width="4" height="3" viewBox="0 0 4 3"><path d="M0 0H4L2 2.5Z" fill="#777"/></svg>
<div class="a" style="left:337.0px;top:86.5px;width:40px;font-size:8px;line-height:12px;color:#6d6f72;white-space:nowrap;text-align:center;">段落</div>
<svg class="a" style="left:440.0px;top:89.0px;" width="6" height="6" viewBox="0 0 6 6"><path d="M0.5 0.5H3M0.5 0.5V3M2 2L5.5 5.5M5.5 3V5.5H3" stroke="#9a9ea3" stroke-width="0.8" fill="none"/></svg>
<div class="a" style="left:454.0px;top:37.0px;width:383px;height:39px;background:#fdfdfd;border:1px solid #cdd1d6"></div>
<div class="a" style="left:455.0px;top:44.0px;width:46px;height:16px;line-height:16px;text-align:center;white-space:nowrap;overflow:hidden;font-family:'Liberation Serif';font-weight:bold;font-size:12px;color:#222">AaBbC</div>
<div class="a" style="left:455.0px;top:61.5px;width:46px;font-size:8px;line-height:12px;color:#666;white-space:nowrap;text-align:center;">标题</div>
<div class="a" style="left:501.0px;top:44.0px;width:46px;height:16px;line-height:16px;text-align:center;white-space:nowrap;overflow:hidden;font-weight:bold;font-size:15px;color:#111;letter-spacing:-0.3px">AaBb</div>
<div class="a" style="left:501.0px;top:61.5px;width:46px;font-size:8px;line-height:12px;color:#666;white-space:nowrap;text-align:center;">标题 1</div>
<div class="a" style="left:547.0px;top:44.0px;width:46px;height:16px;line-height:16px;text-align:center;white-space:nowrap;overflow:hidden;font-family:'Liberation Serif';font-weight:bold;font-size:12px;color:#222">AaBbC</div>
<div class="a" style="left:547.0px;top:61.5px;width:46px;font-size:8px;line-height:12px;color:#666;white-space:nowrap;text-align:center;">标题 2</div>
<div class="a" style="left:594.0px;top:44.0px;width:46px;height:16px;line-height:16px;text-align:center;white-space:nowrap;overflow:hidden;font-family:'Liberation Serif';font-weight:bold;font-size:12px;color:#222">AaBbC</div>
<div class="a" style="left:594.0px;top:61.5px;width:46px;font-size:8px;line-height:12px;color:#666;white-space:nowrap;text-align:center;">副标题</div>
<div class="a" style="left:640.0px;top:44.0px;width:46px;height:16px;line-height:16px;text-align:center;white-space:nowrap;overflow:hidden;font-family:'Liberation Serif';font-style:italic;font-size:8.5px;color:#555">AaBbCcD</div>
<div class="a" style="left:640.0px;top:61.5px;width:46px;font-size:8px;line-height:12px;color:#666;white-space:nowrap;text-align:center;">强调</div>
<div class="a" style="left:687.0px;top:44.0px;width:46px;height:16px;line-height:16px;text-align:center;white-space:nowrap;overflow:hidden;font-family:'Liberation Serif';font-weight:bold;font-size:8.5px;color:#222">AaBbCcD</div>
<div class="a" style="left:687.0px;top:61.5px;width:46px;font-size:8px;line-height:12px;color:#666;white-space:nowrap;text-align:center;">要点</div>
<div class="a" style="left:733.0px;top:44.0px;width:46px;height:16px;line-height:16px;text-align:center;white-space:nowrap;overflow:hidden;font-size:7px;color:#444">AaBbCcDdE</div>
<div class="a" style="left:733.0px;top:61.5px;width:46px;font-size:8px;line-height:12px;color:#666;white-space:nowrap;text-align:center;">页脚</div>
<div class="a" style="left:779.0px;top:44.0px;width:46px;height:16px;line-height:16px;text-align:center;white-space:nowrap;overflow:hidden;font-size:7px;color:#444"><u>AaBbCcDdE</u></div>
<div class="a" style="left:779.0px;top:61.5px;width:46px;font-size:8px;line-height:12px;color:#666;white-space:nowrap;text-align:center;">页眉</div>
<div class="a" style="left:826.0px;top:38.0px;width:10px;height:37px;background:#f3f4f6;border-left:1px solid #d8dbe0"></div>
<div class="a" style="left:826.0px;top:50.0px;width:10px;height:1px;background:#d8dbe0"></div>
<div class="a" style="left:826.0px;top:62.0px;width:10px;height:1px;background:#d8dbe0"></div>
<svg class="a" style="left:829.0px;top:43.0px;" width="5" height="3" viewBox="0 0 5 3"><path d="M0 3H5L2.5 0Z" fill="#c0c3c7"/></svg>
<svg class="a" style="left:829.0px;top:55.0px;" width="5" height="3" viewBox="0 0 5 3"><path d="M0 0H5L2.5 3Z" fill="#777"/></svg>
<svg class="a" style="left:829.0px;top:66.0px;" width="5" height="5" viewBox="0 0 5 5"><path d="M0 0.5H5" stroke="#888" stroke-width="0.8"/><path d="M0 2H5L2.5 4.5Z" fill="#888"/></svg>
<svg class="a" style="left:844.0px;top:38.0px;" width="20" height="19" viewBox="0 0 20 19"><text x="0" y="15" font-size="16" font-weight="bold" fill="#a24fb5" font-family="Liberation Sans">A</text><text x="6" y="19" font-size="17" font-weight="bold" fill="#3f86d6" font-family="Liberation Sans">A</text></svg>
<div class="a" style="left:834.5px;top:60.0px;width:40px;font-size:8px;line-height:12px;color:#444;white-space:nowrap;text-align:center;">更改样式</div>
<svg class="a" style="left:852.0px;top:76.0px;" width="4" height="3" viewBox="0 0 4 3"><path d="M0 0H4L2 2.5Z" fill="#777"/></svg>
<div class="a" style="left:636.0px;top:86.5px;width:40px;font-size:8px;line-height:12px;color:#6d6f72;white-space:nowrap;text-align:center;">样式</div>
<svg class="a" style="left:866.0px;top:89.0px;" width="6" height="6" viewBox="0 0 6 6"><path d="M0.5 0.5H3M0.5 0.5V3M2 2L5.5 5.5M5.5 3V5.5H3" stroke="#9a9ea3" stroke-width="0.8" fill="none"/></svg>
<svg class="a" style="left:879.0px;top:38.0px;" width="11" height="10" viewBox="0 0 11 10"><path d="M1.5 0.5H4.5L5 9.5H0Z" fill="#2f5fa8"/><path d="M6.5 0.5H9.5L11 9.5H6Z" fill="#2f5fa8"/><rect x="4" y="2.5" width="3" height="2.5" fill="#2f5fa8"/><path d="M1.5 5V8.5M7.5 5V8.5" stroke="#cfe0f5" stroke-width="1"/></svg>
<div class="a" style="left:892.0px;top:37.0px;font-size:8px;line-height:12px;color:#444;white-space:nowrap;">查找</div>
<svg class="a" style="left:908.0px;top:42.0px;" width="4" height="3" viewBox="0 0 4 3"><path d="M0 0H4L2 2.5Z" fill="#777"/></svg>
<svg class="a" style="left:879.0px;top:51.0px;" width="11" height="11" viewBox="0 0 11 11"><text x="0" y="6" font-size="6" fill="#777" font-family="Liberation Sans">ab</text><text x="4" y="11" font-size="6" fill="#3a9a3a" font-family="Liberation Sans">ac</text></svg>
<div class="a" style="left:892.0px;top:50.5px;font-size:8px;line-height:12px;color:#444;white-space:nowrap;">替换</div>
<svg class="a" style="left:880.0px;top:65.0px;" width="8" height="11" viewBox="0 0 8 11"><path d="M1 0.5V9.5L3.5 7.5L5 10.5L6.2 10L4.8 7H7.8Z" fill="#fff" stroke="#555" stroke-width="0.8"/></svg>
<div class="a" style="left:892.0px;top:65.0px;font-size:8px;line-height:12px;color:#444;white-space:nowrap;">选择</div>
<svg class="a" style="left:908.0px;top:70.0px;" width="4" height="3" viewBox="0 0 4 3"><path d="M0 0H4L2 2.5Z" fill="#777"/></svg>
<div class="a" style="left:877.0px;top:86.5px;width:40px;font-size:8px;line-height:12px;color:#6d6f72;white-space:nowrap;text-align:center;">编辑</div>
<div class="a" style="left:284.0px;top:0.0px;width:363px;height:35px;background:#1d1f21"></div>
<div class="a" style="left:287.0px;top:13.0px;width:6px;height:10px;background:#3d4043"></div>
<svg class="a" style="left:317.0px;top:6.0px;" width="8" height="13" viewBox="0 0 8 13"><rect x="1.5" y="0" width="5" height="9" rx="2.5" fill="#9a9c9e"/><path d="M4 9V12.5M2 12.5H6" stroke="#9a9c9e" stroke-width="1"/></svg>
<div class="a" style="left:306.0px;top:21.2px;width:30px;font-size:6.5px;line-height:10.5px;color:#a5a7a9;white-space:nowrap;text-align:center;">静音</div>
<div class="a" style="left:346.0px;top:4.0px;width:42px;height:27px;background:#c9cacc;border-radius:3px"></div>
<svg class="a" style="left:361.0px;top:8.0px;" width="13" height="10" viewBox="0 0 13 10"><rect x="0" y="1.5" width="8.5" height="7.5" fill="#2f3133"/><path d="M9 4L12.5 2V8.5L9 6.5Z" fill="#2f3133"/><path d="M1 9.5L10 0.5" stroke="#c9cacc" stroke-width="1.2"/></svg>
<div class="a" style="left:345.0px;top:21.2px;width:44px;font-size:6.5px;line-height:10.5px;color:#2f3133;white-space:nowrap;text-align:center;">开启摄像头</div>
<svg class="a" style="left:407.0px;top:9.0px;" width="10" height="9" viewBox="0 0 10 9"><rect x="0" y="0" width="10" height="7.5" rx="0.8" fill="#8d8f91"/><path d="M2.5 8.5L5 6L7.5 8.5" stroke="#1d1f21" stroke-width="1" fill="none"/></svg>
<div class="a" style="left:392.0px;top:21.2px;width:40px;font-size:6.5px;line-height:10.5px;color:#a5a7a9;white-space:nowrap;text-align:center;">新的共享</div>
<svg class="a" style="left:453.0px;top:7.0px;" width="13" height="11" viewBox="0 0 13 11"><circle cx="4.5" cy="3" r="2.3" fill="#8d8f91"/><circle cx="8" cy="3.5" r="2.3" fill="#8d8f91"/><path d="M0 10C0 7 2.5 6 5 6C7.5 6 10 7 10 10Z" fill="#8d8f91"/><path d="M8 6L12.5 10.5" stroke="#8d8f91" stroke-width="1.5"/></svg>
<div class="a" style="left:439.0px;top:21.2px;width:40px;font-size:6.5px;line-height:10.5px;color:#a5a7a9;white-space:nowrap;text-align:center;">全员静音</div>
<svg class="a" style="left:500.0px;top:7.0px;" width="12" height="11" viewBox="0 0 12 11"><circle cx="5" cy="3" r="2.8" fill="#8d8f91"/><path d="M0 10.5C0 7 2.5 6.5 5 6.5C7 6.5 8 7 8.5 7.5V10.5Z" fill="#8d8f91"/><path d="M8 8.5H12M10 6.5V10.5" stroke="#8d8f91" stroke-width="1"/></svg>
<div class="a" style="left:481.0px;top:21.2px;width:50px;font-size:6.5px;line-height:10.5px;color:#a5a7a9;white-space:nowrap;text-align:center;">成员(13/14)</div>
<div class="a" style="left:532.0px;top:10.0px;width:1px;height:15px;background:#3a3c3f"></div>
<svg class="a" style="left:537.0px;top:14.0px;" width="8" height="7" viewBox="0 0 8 7"><rect x="0" y="4" width="1.5" height="3" fill="#c8c9cb"/><rect x="3" y="2" width="1.5" height="5" fill="#c8c9cb"/><rect x="6" y="0" width="1.5" height="7" fill="#c8c9cb"/></svg>
<div class="a" style="left:550.0px;top:11.8px;font-size:8.5px;line-height:12.5px;color:#d4d5d6;white-space:nowrap;font-weight:bold;letter-spacing:-0.2px">00:24:27</div>
<div class="a" style="left:590.0px;top:8.0px;width:47px;height:19px;background:#e8503b;border-radius:2px"></div>
<div class="a" style="left:590.0px;top:12.0px;width:47px;font-size:7px;line-height:11px;color:#ffe9e4;white-space:nowrap;text-align:center;">结束共享</div>
<div class="a" style="left:894.0px;top:6.0px;width:33px;height:20px;background:#848688;border-radius:3px 0 0 3px"></div>
<svg class="a" style="left:905.0px;top:7.0px;" width="10" height="17" viewBox="0 0 10 17"><path d="M1 0L5 3L9 0" stroke="#4a4c4e" stroke-width="1" fill="none"/><rect x="2.5" y="3" width="5" height="9" rx="2.5" fill="#b8babc"/><path d="M5 12V15M3 15H7" stroke="#6a6c6e" stroke-width="0.8"/></svg>
<svg class="a" style="left:915.0px;top:19.0px;" width="11" height="11" viewBox="0 0 11 11"><circle cx="5.5" cy="5.5" r="5.5" fill="#3b78d0"/><text x="5.5" y="8.5" font-size="8" text-anchor="middle" fill="#8ab0e8" font-family="Liberation Sans">?</text></svg>
<div class="a" style="left:259.0px;top:112.8px;width:400px;font-size:18.5px;line-height:22.5px;color:#1a1a1a;white-space:nowrap;text-align:center;-webkit-text-stroke:0.45px #1a1a1a;">程幼金书记在 2020 年党风廉政建设</div>
<svg class="a" style="left:607.0px;top:124.0px;" width="5" height="5" viewBox="0 0 5 5"><path d="M4 0V4H0.5M2 2.5L0.5 4L2 5.5" stroke="#777" stroke-width="0.7" fill="none"/></svg>
<svg class="a" style="left:535.0px;top:148.0px;" width="5" height="6" viewBox="0 0 5 6"><path d="M4 0V4H0.5M2 2.5L0.5 4L2 5.5" stroke="#777" stroke-width="0.7" fill="none"/></svg>
<svg class="a" style="left:524.0px;top:173.0px;" width="5" height="6" viewBox="0 0 5 6"><path d="M4 0V4H0.5M2 2.5L0.5 4L2 5.5" stroke="#777" stroke-width="0.7" fill="none"/></svg>
<div class="a" style="left:259.0px;top:137.2px;width:400px;font-size:18.5px;line-height:22.5px;color:#1a1a1a;white-space:nowrap;text-align:center;-webkit-text-stroke:0.45px #1a1a1a;">工作会议上的讲话</div>
<div class="a" style="left:309.0px;top:165.8px;width:300px;font-size:11.5px;line-height:15.5px;color:#333;white-space:nowrap;text-align:center;font-family:'Liberation Serif';letter-spacing:1.5px;-webkit-text-stroke:0.25px #333">（2020 年 5 月 8 日）</div>
<svg class="a" style="left:282.0px;top:195.0px;" width="5" height="6" viewBox="0 0 5 6"><path d="M4 0V4H0.5M2 2.5L0.5 4L2 5.5" stroke="#888" stroke-width="0.7" fill="none"/></svg>
<div class="a" style="left:282.5px;top:214.8px;font-size:11.5px;line-height:15.5px;color:#404040;white-space:nowrap;letter-spacing:3.8px;transform:scaleX(0.9);transform-origin:0 50%;-webkit-text-stroke:0.15px #404040">同志们：</div>
<svg class="a" style="left:338.0px;top:220.0px;" width="5" height="6" viewBox="0 0 5 6"><path d="M4 0V4H0.5M2 2.5L0.5 4L2 5.5" stroke="#888" stroke-width="0.7" fill="none"/></svg>
<div class="a" style="left:309.7px;top:238.8px;width:338.3px;height:15px;font-size:11.5px;line-height:15px;color:#404040;white-space:nowrap;letter-spacing:3.8px;transform:scaleX(0.9);transform-origin:0 50%;-webkit-text-stroke:0.15px #404040">这次党风廉政建设工作会议，是在全校上下深入学习</div>
<div class="a" style="left:282.5px;top:262.9px;width:365.5px;height:15px;font-size:11.5px;line-height:15px;color:#404040;white-space:nowrap;letter-spacing:3.8px;transform:scaleX(0.9);transform-origin:0 50%;-webkit-text-stroke:0.15px #404040">贯彻习近平新时代中国特色社会主义思想、党的十九届四</div>
<div class="a" style="left:282.5px;top:286.9px;width:365.5px;height:15px;font-size:11.5px;line-height:15px;color:#404040;white-space:nowrap;letter-spacing:3.8px;transform:scaleX(0.9);transform-origin:0 50%;-webkit-text-stroke:0.15px #404040">中全会精神和习近平总书记关于统筹推进疫情防控和经济</div>
<div class="a" style="left:282.5px;top:311.0px;width:365.5px;height:15px;font-size:11.5px;line-height:15px;color:#404040;white-space:nowrap;letter-spacing:3.8px;transform:scaleX(0.9);transform-origin:0 50%;-webkit-text-stroke:0.15px #404040">社会发展的重要讲话精神尤其是考察湖北重要讲话精神，</div>
<div class="a" style="left:282.5px;top:335.0px;width:365.5px;height:15px;font-size:11.5px;line-height:15px;color:#404040;white-space:nowrap;letter-spacing:3.8px;transform:scaleX(0.9);transform-origin:0 50%;-webkit-text-stroke:0.15px #404040">认真学习贯彻十九届中纪委四次全会、省纪委十一届四次</div>
<div class="a" style="left:282.5px;top:359.1px;width:355.5px;height:15px;font-size:11.5px;line-height:15px;color:#404040;white-space:nowrap;text-align:justify;text-align-last:justify;text-justify:inter-character">全会精神和 2020 年教育系统全面从严治党会议，统筹推进</div>
<div class="a" style="left:282.5px;top:383.1px;width:365.5px;height:15px;font-size:11.5px;line-height:15px;color:#404040;white-space:nowrap;letter-spacing:3.8px;transform:scaleX(0.9);transform-origin:0 50%;-webkit-text-stroke:0.15px #404040">学校疫情防控和各项事业发展的关键节点召开的一次重要</div>
<div class="a" style="left:282.5px;top:407.1px;width:365.5px;height:15px;font-size:11.5px;line-height:15px;color:#404040;white-space:nowrap;letter-spacing:3.8px;transform:scaleX(0.9);transform-origin:0 50%;-webkit-text-stroke:0.15px #404040">会议。徐慢同志代表校纪委作的工作报告，是经过校党委</div>
<div class="a" style="left:282.5px;top:431.2px;width:365.5px;height:15px;font-size:11.5px;line-height:15px;color:#404040;white-space:nowrap;letter-spacing:3.8px;transform:scaleX(0.9);transform-origin:0 50%;-webkit-text-stroke:0.15px #404040">常委会会议审议通过的，我完全赞成。各级党组织、各单</div>
<div class="a" style="left:282.5px;top:455.2px;width:365.5px;height:15px;font-size:11.5px;line-height:15px;color:#404040;white-space:nowrap;letter-spacing:3.8px;transform:scaleX(0.9);transform-origin:0 50%;-webkit-text-stroke:0.15px #404040">位以及干部师生要认真抓好贯彻落实。下面，我就学习贯</div>
<div class="a" style="left:282.5px;top:479.3px;width:365.5px;height:15px;font-size:11.5px;line-height:15px;color:#404040;white-space:nowrap;letter-spacing:3.8px;transform:scaleX(0.9);transform-origin:0 50%;-webkit-text-stroke:0.15px #404040">彻中纪委全会、教育系统全面从严治党会议和省纪委全会</div>
<div class="a" style="left:282.5px;top:502.5px;font-size:11.5px;line-height:15.5px;color:#404040;white-space:nowrap;letter-spacing:3.8px;transform:scaleX(0.9);transform-origin:0 50%;-webkit-text-stroke:0.15px #404040">精神，讲三点意见。</div>
<svg class="a" style="left:409.0px;top:507.0px;" width="5" height="6" viewBox="0 0 5 6"><path d="M4 0V4H0.5M2 2.5L0.5 4L2 5.5" stroke="#888" stroke-width="0.7" fill="none"/></svg>
<svg class="a" style="left:323.0px;top:418.0px;" width="130" height="3" viewBox="0 0 130 3"><path d="M0 1.5 q1 -1.5 2 0 q1 1.5 2 0 q1 -1.5 2 0 q1 1.5 2 0 q1 -1.5 2 0 q1 1.5 2 0 q1 -1.5 2 0 q1 1.5 2 0 q1 -1.5 2 0 q1 1.5 2 0 q1 -1.5 2 0 q1 1.5 2 0 q1 -1.5 2 0 q1 1.5 2 0 q1 -1.5 2 0 q1 1.5 2 0 q1 -1.5 2 0 q1 1.5 2 0 q1 -1.5 2 0 q1 1.5 2 0 q1 -1.5 2 0 q1 1.5 2 0 q1 -1.5 2 0 q1 1.5 2 0 q1 -1.5 2 0 q1 1.5 2 0 q1 -1.5 2 0 q1 1.5 2 0 q1 -1.5 2 0 q1 1.5 2 0 q1 -1.5 2 0 q1 1.5 2 0 q1 -1.5 2 0 q1 1.5 2 0 q1 -1.5 2 0 q1 1.5 2 0 q1 -1.5 2 0 q1 1.5 2 0 q1 -1.5 2 0 q1 1.5 2 0 q1 -1.5 2 0 q1 1.5 2 0 q1 -1.5 2 0 q1 1.5 2 0 q1 -1.5 2 0 q1 1.5 2 0 q1 -1.5 2 0 q1 1.5 2 0 q1 -1.5 2 0 q1 1.5 2 0 q1 -1.5 2 0 q1 1.5 2 0 q1 -1.5 2 0 q1 1.5 2 0 q1 -1.5 2 0 q1 1.5 2 0 q1 -1.5 2 0 q1 1.5 2 0 q1 -1.5 2 0 q1 1.5 2 0 q1 -1.5 2 0 q1 1.5 2 0 q1 -1.5 2 0 q1 1.5 2 0 q1 -1.5 2 0 q1 1.5 2 0" stroke="#62b062" stroke-width="0.9" fill="none"/></svg>
<div class="a" style="left:308.0px;top:525.8px;font-size:13px;line-height:17px;color:#1e1e1e;white-space:nowrap;font-weight:bold;letter-spacing:0.85px">一、深刻理解学校全面从严治党的新成效</div>
<svg class="a" style="left:557.0px;top:532.0px;" width="5" height="6" viewBox="0 0 5 6"><path d="M4 0V4H0.5M2 2.5L0.5 4L2 5.5" stroke="#888" stroke-width="0.7" fill="none"/></svg>
<svg class="a" style="left:691.5px;top:339.5px;" width="6" height="12" viewBox="0 0 6 12"><path d="M0.5 0.5H5.5M3 0.5V11.5M0.5 11.5H5.5" stroke="#444" stroke-width="0.9" fill="none"/></svg>
<div class="a" style="left:5.0px;top:541.0px;font-size:8px;line-height:12px;color:#5a5d61;white-space:nowrap;">页面: 1/12</div>
<div class="a" style="left:49.0px;top:542.0px;width:1px;height:10px;background:#c3c7cc"></div>
<div class="a" style="left:54.0px;top:541.0px;font-size:8px;line-height:12px;color:#5a5d61;white-space:nowrap;">字数: 6,646</div>
<div class="a" style="left:100.0px;top:542.0px;width:1px;height:10px;background:#c3c7cc"></div>
<svg class="a" style="left:106.0px;top:541.0px;" width="11" height="11" viewBox="0 0 11 11"><path d="M1 6L5 9L10 5L6 2Z" fill="#4a86c8"/><path d="M5 1L9 5M9 1L5 5" stroke="#e03a2a" stroke-width="1.2"/></svg>
<div class="a" style="left:127.0px;top:541.0px;font-size:8px;line-height:12px;color:#5a5d61;white-space:nowrap;">中文(中国)</div>
<div class="a" style="left:169.0px;top:542.0px;width:1px;height:10px;background:#c3c7cc"></div>
<div class="a" style="left:175.0px;top:541.0px;font-size:8px;line-height:12px;color:#5a5d61;white-space:nowrap;">插入</div>
<div class="a" style="left:196.0px;top:542.0px;width:1px;height:10px;background:#c3c7cc"></div>
<div class="a" style="left:745.0px;top:542.0px;width:1px;height:10px;background:#c3c7cc"></div>
<div class="a" style="left:749.0px;top:541.0px;width:12px;height:12px;background:linear-gradient(#fde9a8,#f5cf6a);border:1px solid #e0b040"></div>
<div class="a" style="left:751.0px;top:543.0px;width:8px;height:8px;background:#bfc3c8"></div>
<div class="a" style="left:765.0px;top:543.0px;width:8px;height:8px;border:1px solid #9aa0a6;background:#dde1e5"></div>
<div class="a" style="left:777.0px;top:543.0px;width:8px;height:8px;border:1px solid #9aa0a6;background:#dde1e5"></div>
<div class="a" style="left:788.0px;top:543.0px;width:8px;height:8px;border:1px solid #9aa0a6;background:#dde1e5"></div>
<div class="a" style="left:799.0px;top:543.0px;width:8px;height:8px;border:1px solid #9aa0a6;background:#dde1e5"></div>
<div class="a" style="left:813.0px;top:541.0px;font-size:8px;line-height:12px;color:#5a5d61;white-space:nowrap;">100%</div>
<svg class="a" style="left:839.0px;top:541.0px;" width="13" height="13" viewBox="0 0 13 13"><circle cx="6.5" cy="6.5" r="5.5" fill="#f4f5f6" stroke="#9aa0a6" stroke-width="0.8"/><path d="M3.5 6.5H9.5" stroke="#555" stroke-width="1.2"/></svg>
<div class="a" style="left:853.0px;top:547.0px;width:58px;height:1px;background:#9aa0a6"></div>
<svg class="a" style="left:877.0px;top:542.0px;" width="5" height="9" viewBox="0 0 5 9"><path d="M0.5 0.5H4.5V6L2.5 8.5L0.5 6Z" fill="#f4f5f6" stroke="#888" stroke-width="0.8"/></svg>
<svg class="a" style="left:911.0px;top:541.0px;" width="13" height="13" viewBox="0 0 13 13"><circle cx="6.5" cy="6.5" r="5.5" fill="#f4f5f6" stroke="#9aa0a6" stroke-width="0.8"/><path d="M3.5 6.5H9.5M6.5 3.5V9.5" stroke="#555" stroke-width="1.2"/></svg>
<svg class="a" style="left:10.0px;top:561.0px;" width="11" height="11" viewBox="0 0 11 11"><path d="M0 1.6L4.6 0.9V5.1H0Z M5.4 0.8L11 0V5.1H5.4Z M0 5.9H4.6V10.1L0 9.4Z M5.4 5.9H11V11L5.4 10.2Z" fill="#f2f2f2"/></svg>
<svg class="a" style="left:40.0px;top:560.0px;" width="12" height="13" viewBox="0 0 12 13"><rect x="2.5" y="2.5" width="7" height="8" fill="none" stroke="#e8e8e8" stroke-width="1.3"/><path d="M0 0.5H2M0 12.5H2M10 12.5H12M11.5 3V10" stroke="#e8e8e8" stroke-width="1.2"/></svg>
<svg class="a" style="left:70.0px;top:559.0px;" width="14" height="14" viewBox="0 0 14 14"><circle cx="4" cy="4" r="3.6" fill="#f0f0f0"/><circle cx="10" cy="4" r="3.6" fill="#f0f0f0"/><circle cx="4" cy="10" r="3.6" fill="#f0f0f0"/><circle cx="10" cy="10" r="3.6" fill="#f0f0f0"/><circle cx="7" cy="7" r="2" fill="#16181a"/></svg>
<div class="a" style="left:96.0px;top:556.0px;width:102px;height:22px;background:#eeeff0"></div>
<svg class="a" style="left:99.0px;top:560.0px;" width="13" height="13" viewBox="0 0 13 13"><text x="6.5" y="11.5" font-size="15" font-weight="bold" text-anchor="middle" fill="#2d7fd6" font-family="Liberation Sans">e</text></svg>
<svg class="a" style="left:113.0px;top:566.0px;" width="2" height="2" viewBox="0 0 2 2"><circle cx="1" cy="1" r="1" fill="#777"/></svg>
<div class="a" style="left:120.0px;top:561.2px;font-size:7.5px;line-height:11.5px;color:#333;white-space:nowrap;">李光洁官宣当爸</div>
<div class="a" style="left:198.0px;top:556.0px;width:36px;height:22px;background:#2e8cf2"></div>
<div class="a" style="left:198.0px;top:561.2px;width:36px;font-size:7.5px;line-height:11.5px;color:#e6f1ff;white-space:nowrap;text-align:center;">搜索一下</div>
<svg class="a" style="left:245.0px;top:559.0px;" width="15" height="15" viewBox="0 0 15 15"><text x="7.5" y="14" font-size="19" font-weight="bold" text-anchor="middle" fill="#1b88e8" font-family="Liberation Sans">e</text></svg>
<div class="a" style="left:239.0px;top:577.0px;width:26px;height:2px;background:#6a8fb5"></div>
<svg class="a" style="left:277.0px;top:560.0px;" width="15" height="12" viewBox="0 0 15 12"><path d="M0 1H6L7.5 2.5H15V12H0Z" fill="#e9b63a"/><rect x="0" y="4" width="15" height="8" fill="#f6cf55"/><rect x="4" y="8" width="7" height="3" fill="#3a9ae0"/></svg>
<svg class="a" style="left:308.0px;top:559.0px;" width="15" height="15" viewBox="0 0 15 15"><circle cx="7.5" cy="7.5" r="7" fill="#4fb830"/><circle cx="7.5" cy="7.5" r="4.5" fill="#7fd858"/><path d="M4.5 6.5H10.5M4.5 9H10.5" stroke="#fff" stroke-width="1.2"/></svg>
<div class="a" style="left:332.0px;top:554.0px;width:31px;height:25px;background:#3a3c3e"></div>
<svg class="a" style="left:339.0px;top:559.0px;" width="16" height="14" viewBox="0 0 16 14"><rect x="2" y="0" width="13" height="14" fill="#f4f6f8"/><rect x="0" y="2" width="10" height="10" fill="#2b5aaa"/><text x="5" y="10" font-size="8" font-weight="bold" text-anchor="middle" fill="#fff" font-family="Liberation Sans">W</text></svg>
<div class="a" style="left:334.0px;top:577.0px;width:27px;height:2px;background:#6a8fb5"></div>
<svg class="a" style="left:371.0px;top:559.0px;" width="15" height="15" viewBox="0 0 15 15"><circle cx="7.5" cy="7.5" r="7.2" fill="#2d8ef0"/><path d="M3.5 5L11.5 4.5L8.5 11L7.5 8.5L4.5 10L6 7.5Z" fill="#fff"/></svg>
<div class="a" style="left:367.0px;top:577.0px;width:26px;height:2px;background:#6a8fb5"></div>
<svg class="a" style="left:403.0px;top:559.0px;" width="15" height="15" viewBox="0 0 15 15"><rect x="0" y="0" width="15" height="15" rx="3" fill="#2d8ef0"/><path d="M4 3C3 5 4 9 7 11C9 12.5 11 12.5 12 11.5L10.5 9.5L9 10.5C8 10 5.8 8 5.3 6.5L6.5 5.5L5.5 3Z" fill="#fff"/><circle cx="11" cy="11" r="3" fill="#fff"/><circle cx="11" cy="11" r="1.8" fill="#2d8ef0"/></svg>
<div class="a" style="left:399.0px;top:577.0px;width:26px;height:2px;background:#6a8fb5"></div>
<svg class="a" style="left:690.0px;top:562.0px;" width="13" height="9" viewBox="0 0 13 9"><path d="M2 9C0 9 0 6 2 5.5C2 3 5 2 6.5 3.5C7.5 1 11.5 1.5 11.5 4.5C13.5 5 13.5 9 11 9Z" fill="#f0f0f0"/><path d="M10 0.5V2M12.5 1.5L11.5 2.5" stroke="#f0f0f0" stroke-width="0.6"/></svg>
<div class="a" style="left:707.0px;top:561.2px;font-size:7.5px;line-height:11.5px;color:#e8e8e8;white-space:nowrap;">20℃</div>
<svg class="a" style="left:733.0px;top:563.0px;" width="8" height="5" viewBox="0 0 8 5"><path d="M0.5 4.5L4 1L7.5 4.5" stroke="#e8e8e8" stroke-width="1" fill="none"/></svg>
<svg class="a" style="left:746.0px;top:561.0px;" width="11" height="11" viewBox="0 0 11 11"><circle cx="5.5" cy="5.5" r="5.3" fill="#2a9a3a"/><path d="M5.5 1L10 5.5L5.5 10L1 5.5Z" fill="#f2d21a"/><circle cx="5.5" cy="5.5" r="2" fill="#1a4a9a"/></svg>
<svg class="a" style="left:761.0px;top:561.0px;" width="11" height="11" viewBox="0 0 11 11"><path d="M5.5 0L11 5.5L5.5 11L0 5.5Z" fill="#8a8c8e"/><path d="M5.5 0L11 5.5L5.5 5.5Z" fill="#b0b2b4"/></svg>
<svg class="a" style="left:777.0px;top:562.0px;" width="11" height="9" viewBox="0 0 11 9"><path d="M0 3H2.5L5.5 0.5V8.5L2.5 6H0Z" fill="#e8e8e8"/><path d="M7 2C8 3 8 6 7 7M9 1C10.5 2.5 10.5 6.5 9 8" stroke="#8a8c8e" stroke-width="0.8" fill="none"/></svg>
<svg class="a" style="left:791.0px;top:563.0px;" width="13" height="7" viewBox="0 0 13 7"><rect x="0" y="1" width="12" height="6" fill="none" stroke="#e8e8e8" stroke-width="0.8"/><rect x="1.5" y="2.5" width="6" height="3" fill="#e8e8e8"/><path d="M1 0H3" stroke="#e8e8e8"/></svg>
<div class="a" style="left:806.0px;top:560.5px;font-size:9px;line-height:13px;color:#f0f0f0;white-space:nowrap;font-weight:bold">中</div>
<div class="a" style="left:824.0px;top:555.2px;width:40px;font-size:7.5px;line-height:11.5px;color:#f0f0f0;white-space:nowrap;text-align:center;">10:22</div>
<div class="a" style="left:819.0px;top:567.2px;width:50px;font-size:7.5px;line-height:11.5px;color:#f0f0f0;white-space:nowrap;text-align:center;">2020/5/21</div>
<svg class="a" style="left:875.0px;top:560.0px;" width="14" height="14" viewBox="0 0 14 14"><rect x="0.5" y="0.5" width="9" height="10" fill="#f0f0f0"/><rect x="5" y="5" width="9" height="9" fill="#2a3a5a" stroke="#f0f0f0" stroke-width="0.8"/><text x="9.5" y="12.5" font-size="7" text-anchor="middle" fill="#fff" font-family="Liberation Sans">1</text></svg>
<svg class="a" style="left:900.0px;top:561.0px;" width="12" height="11" viewBox="0 0 12 11"><path d="M0.5 0.5H11.5V8H6L4 10.5V8H0.5Z" fill="none" stroke="#e8e8e8" stroke-width="0.9"/></svg>
<div class="a" style="left:925.0px;top:554.0px;width:2px;height:25px;background:#2a2c2e"></div>
<div class="a" style="left:265.0px;top:110.0px;width:15px;height:1px;background:#c4c7ca"></div>
<div class="a" style="left:280.0px;top:107.0px;width:1px;height:4px;background:#c4c7ca"></div>
<div class="a" style="left:638.0px;top:110.0px;width:15px;height:1px;background:#c4c7ca"></div>
<div class="a" style="left:638.0px;top:107.0px;width:1px;height:4px;background:#c4c7ca"></div>
<svg class="a" style="left:917.0px;top:103.0px;" width="8" height="2" viewBox="0 0 8 2"><path d="M0.5 1H7.5" stroke="#777" stroke-width="0.9"/></svg>
<svg class="a" style="left:917.0px;top:107.0px;" width="9" height="8" viewBox="0 0 9 8"><rect x="0.5" y="0.5" width="7" height="6.5" rx="1.5" fill="#f4f5f6" stroke="#9a9ea3" stroke-width="0.8"/><path d="M2.5 2.5H5.5V5" stroke="#9a9ea3" stroke-width="0.7" fill="none"/></svg>
<div class="a" style="left:916.0px;top:117.0px;width:11px;height:1px;background:#d2d6da"></div>
<svg class="a" style="left:918.0px;top:121.0px;" width="7" height="4" viewBox="0 0 7 4"><path d="M0.5 3.5L3.5 0.5L6.5 3.5Z" fill="#444"/></svg>
<svg class="a" style="left:915.0px;top:123.0px;" width="28" height="28" viewBox="0 0 28 28"><defs><linearGradient id="gg" x1="0" y1="0" x2="0" y2="1"><stop offset="0" stop-color="#7de07a"/><stop offset="0.5" stop-color="#3fc748"/><stop offset="1" stop-color="#2fb03a"/></linearGradient></defs><circle cx="14.5" cy="14" r="13.5" fill="#c9cccf"/><circle cx="14.5" cy="14" r="12.5" fill="url(#gg)"/><text x="5" y="17.5" font-size="10" font-weight="bold" fill="#fff" font-family="Liberation Sans">40</text></svg>
<svg class="a" style="left:918.5px;top:499.5px;" width="7" height="4" viewBox="0 0 7 4"><path d="M0 0H7L3.5 3.5Z" fill="#555"/></svg>
<div class="a" style="left:916.0px;top:506.0px;width:11px;height:1px;background:#d2d6da"></div>
<svg class="a" style="left:919.5px;top:509.0px;" width="5" height="6" viewBox="0 0 5 6"><path d="M1 0.5H4M0.5 2L2.5 0.5L4.5 2V5.5H0.5Z" fill="#777"/></svg>
<svg class="a" style="left:918.5px;top:519.0px;" width="7" height="7" viewBox="0 0 7 7"><circle cx="3.5" cy="3.5" r="2.8" fill="none" stroke="#888" stroke-width="0.9"/></svg>
<svg class="a" style="left:918.5px;top:530.0px;" width="7" height="8" viewBox="0 0 7 8"><path d="M0.5 0.5L3.5 3.5L6.5 0.5ZM0.5 4L3.5 7L6.5 4Z" fill="#555"/></svg></div>

<!-- segmented -->
<div class="a" style="left:1044px;top:619px;width:158px;height:30px;border-radius:8px;background:#404347;overflow:hidden">
 <div class="a" style="left:52px;top:0;width:1px;height:30px;background:#35383c"></div>
 <div class="a" style="left:106px;top:0;width:52px;height:30px;background:#d5d6d8;border-radius:0 8px 8px 0"></div>
 <svg class="a" style="left:18px;top:7px" width="17" height="17" viewBox="0 0 17 17" fill="#9c9ea2"><path d="M3 0H7V17H3A3 3 0 0 1 0 14V3A3 3 0 0 1 3 0Z"/><path d="M8.5 0H14A3 3 0 0 1 17 3V7.7H8.5Z"/><path d="M8.5 9.3H17V14A3 3 0 0 1 14 17H8.5Z"/></svg>
 <svg class="a" style="left:70px;top:7px" width="17" height="17" viewBox="0 0 17 17" fill="#9c9ea2"><path d="M3 0H7.7V7.7H0V3A3 3 0 0 1 3 0Z"/><path d="M9.3 0H14A3 3 0 0 1 17 3V7.7H9.3Z"/><path d="M0 9.3H7.7V17H3A3 3 0 0 1 0 14Z"/><path d="M9.3 9.3H17V14A3 3 0 0 1 14 17H9.3Z"/></svg>
 <svg class="a" style="left:124.5px;top:8px" width="18" height="14" viewBox="0 0 18 14" stroke="#46484c" stroke-width="2.5" stroke-linecap="round"><path d="M1.8 2H15.8M1.8 7H15.8M1.8 12H15.8"/></svg>
</div>
<div class="a slb" style="left:1045px">演讲</div>
<div class="a slb" style="left:1097px">宫格</div>
<div class="a slb" style="left:1150px">列表</div>
<div class="a slb" style="left:1207px">设置</div>
<svg class="a" style="left:1226.5px;top:628px" width="14" height="14" viewBox="0 0 14 14"><path fill="#9c9ea2" fill-rule="evenodd" d="M6 0H8L8.4 1.8L9.8 2.4L11.4 1.4L12.6 2.6L11.6 4.2L12.2 5.6L14 6V8L12.2 8.4L11.6 9.8L12.6 11.4L11.4 12.6L9.8 11.6L8.4 12.2L8 14H6L5.6 12.2L4.2 11.6L2.6 12.6L1.4 11.4L2.4 9.8L1.8 8.4L0 8V6L1.8 5.6L2.4 4.2L1.4 2.6L2.6 1.4L4.2 2.4L5.6 1.8ZM7 4.5A2.5 2.5 0 1 0 7 9.5A2.5 2.5 0 1 0 7 4.5Z"/></svg>
<!-- logo -->
<svg class="a" style="left:16.7px;top:632.2px" width="14" height="14" viewBox="0 0 14 14"><circle cx="7" cy="7" r="7" fill="#6b6d71"/><path d="M3.6 3.2L10.3 6.4L9.4 7.6L8.6 10.6L6.6 8.6L5.2 8.9L5.6 7.3L4.2 6.6L4.8 5.6Z" fill="#36393e"/></svg>
<div class="a" style="left:33px;top:632.5px;font-size:11px;line-height:14px;color:#6b6d71">钉钉</div>
<!-- name -->
<div class="a" style="left:15px;top:580.5px;font-size:11px;line-height:14px;color:#f0f0f0;white-space:nowrap">李鸿瑞</div>
<!-- more -->
<div class="a" style="left:989px;top:31px;width:33px;height:21px;border-radius:3px;background:#1f2226"></div>
<svg class="a" style="left:999px;top:39px" width="13" height="5" viewBox="0 0 13 5" fill="#e0e0e0"><circle cx="2" cy="2.5" r="1.4"/><circle cx="6.5" cy="2.5" r="1.4"/><circle cx="11" cy="2.5" r="1.4"/></svg>
<!-- chevron -->
<div class="a" style="left:1009px;top:285px;width:18px;height:60px;background:#1f2226"></div>
<svg class="a" style="left:1012px;top:306px" width="10" height="18" viewBox="0 0 10 18" fill="none" stroke="#8a8c90" stroke-width="1.3"><path d="M2 1.5L8.5 9L2 16.5"/></svg>
<!-- blue circle -->
<svg class="a" style="left:1006px;top:585px" width="16" height="16" viewBox="0 0 16 16"><circle cx="8" cy="8" r="7.6" fill="#2d8ff0"/><path d="M4 5H12V10.5H9.5L8 9L6.5 10.5H4Z" fill="#fff"/><path d="M5.8 12L8 9.8L10.2 12" stroke="#fff" stroke-width="1" fill="none"/></svg>
<!-- tooltip -->
<div class="a" style="left:1127px;top:541.5px;width:126px;height:38px;border-radius:5px;background:#020202"></div>
<div class="a" style="left:1141.5px;top:554.5px;font-size:13px;line-height:16px;color:#f2f2f2;white-space:nowrap">李鸿瑞 <span style="color:#7a7b7d;margin-left:4.5px">正在发言</span></div>

</body></html>
